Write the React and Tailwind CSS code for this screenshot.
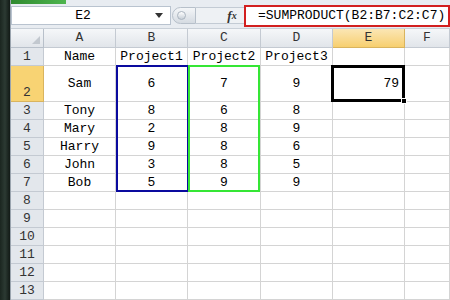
import React from 'react';

const cols = ['A', 'B', 'C', 'D', 'E', 'F'];

const data = [
  ['Name', 'Project1', 'Project2', 'Project3', '', ''],
  ['Sam', '6', '7', '9', '79', ''],
  ['Tony', '8', '6', '8', '', ''],
  ['Mary', '2', '8', '9', '', ''],
  ['Harry', '9', '8', '6', '', ''],
  ['John', '3', '8', '5', '', ''],
  ['Bob', '5', '9', '9', '', ''],
];

const rowCount = 13;

function FormulaBar() {
  return (
    <div className="h-[26px] flex items-center bg-[#e8ecf1] border-b border-[#c9d0d8]">
      <div className="h-[19px] w-[160px] bg-white border border-[#b9c3cf] flex items-center relative">
        <span className="flex-1 text-center text-[13px] pr-[16px]">E2</span>
        <span className="absolute right-[7px] top-[6px] w-0 h-0 border-l-[4px] border-r-[4px] border-t-[5px] border-l-transparent border-r-transparent border-t-[#333]" />
      </div>
      <div className="ml-[1px] h-[17px] w-[24px] rounded-l-full bg-gradient-to-b from-[#f4f6f8] to-[#d5dbe2] border border-[#b7c0ca] flex items-center pl-[4px]">
        <span className="w-[9px] h-[9px] rounded-full bg-gradient-to-b from-white to-[#c8d0d8] border border-[#aab4bf]" />
      </div>
      <div className="flex-1 h-[17px] bg-[#eef1f4] border-y border-[#c3cbd4]" />
      <div className="w-[24px] h-[17px] flex items-center justify-center bg-[#eef1f4] border-y border-[#c3cbd4] italic text-[13px] text-[#333]" style={{ fontFamily: '"Liberation Serif", serif' }}>
        <span className="font-bold">f</span><span className="text-[10px] font-bold">x</span>
      </div>
      <div className="h-[22px] w-[206px] bg-white border-2 border-[#d21f1f] flex items-center pl-[12px] text-[13px] whitespace-nowrap overflow-hidden">
        =SUMPRODUCT(B2:B7:C2:C7)
      </div>
    </div>
  );
}

function Sheet() {
  const rowHeights = Array.from({ length: rowCount }, (_, i) => (i === 1 ? 'h-[36px]' : 'h-[18px]'));
  return (
    <div className="relative">
      <div className="grid grid-cols-[33px_72px_72px_73px_72px_72px_1fr]">
        <div className="h-[19px] bg-gradient-to-b from-[#f5f7f9] to-[#e1e5ea] border-r border-b border-[#b8c0ca] flex items-end justify-end p-[3px]">
          <span className="w-0 h-0 border-b-[8px] border-l-[8px] border-b-[#c2c8cf] border-l-transparent" />
        </div>
        {cols.map((c) => (
          <div
            key={c}
            className={
              'h-[19px] flex items-center justify-center text-[13px] border-r border-b ' +
              (c === 'E'
                ? 'bg-gradient-to-b from-[#fbe6b4] to-[#f7cf6e] border-[#d9b45e] text-[#333]'
                : 'bg-gradient-to-b from-[#f5f7f9] to-[#e1e5ea] border-[#c4cad2] text-[#333]')
            }
          >
            {c}
          </div>
        ))}
        {Array.from({ length: rowCount }, (_, r) => (
          <React.Fragment key={r}>
            <div
              className={
                rowHeights[r] +
                ' flex items-end justify-center text-[13px] leading-[17px] border-r border-b ' +
                (r === 1 ? 'bg-[#f8d373] border-[#d9b45e] text-[#333]' : 'bg-[#e3e7ec] border-[#c4cad2] text-[#333]')
              }
            >
              {r + 1}
            </div>
            {cols.map((c, ci) => {
              const v = data[r] ? data[r][ci] : '';
              const align = ci === 4 ? 'justify-end pr-[5px]' : 'justify-center';
              return (
                <div
                  key={c}
                  className={rowHeights[r] + ' flex items-center text-[13px] text-black border-r border-b border-[#d4d4d4] ' + align}
                >
                  {v}
                </div>
              );
            })}
          </React.Fragment>
        ))}
      </div>
      {/* range highlights */}
      <div className="absolute left-[105px] top-[36px] w-[73px] h-[127px] border-2 border-[#0a0a9e]" />
      <div className="absolute left-[177px] top-[36px] w-[72px] h-[127px] border-2 border-[#35e635]" />
      <div className="absolute left-[320px] top-[36px] w-[74px] h-[37px] border-[3px] border-black">
        <span className="absolute right-[-5px] bottom-[-5px] w-[6px] h-[6px] bg-black border border-white" />
      </div>
    </div>
  );
}

export default function App() {
  return (
    <div className="w-[450px] h-[300px] flex overflow-hidden bg-white" style={{ fontFamily: '"Liberation Mono", "Noto Sans CJK SC", monospace' }}>
      <div className="w-[10px] h-full bg-gradient-to-r from-[#1b2620] via-[#2c3a33] to-[#121a16]" />
      <div className="flex-1 flex flex-col border-l border-[#9aa4ae]">
        <div className="h-[4px] flex bg-[#e8ecf1]">
          <div className="w-[55px] bg-gradient-to-r from-[#2f8a2f] to-[#4eb54e]" />
        </div>
        <FormulaBar />
        <Sheet />
      </div>
    </div>
  );
}
